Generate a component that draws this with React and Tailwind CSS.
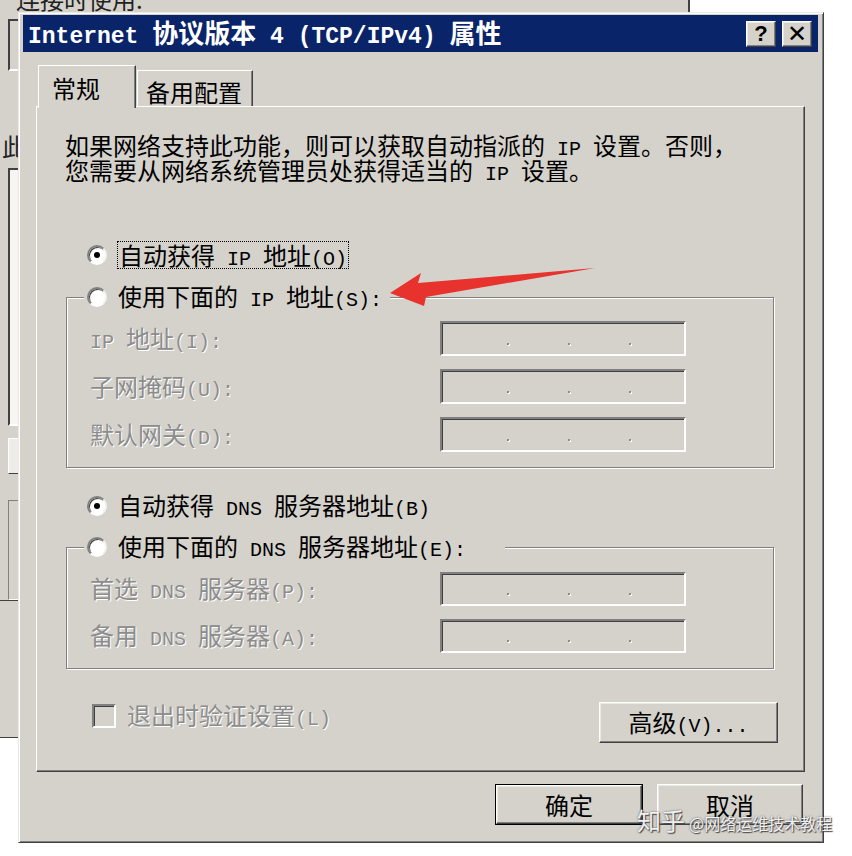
import React from "react";

const M = ({ children, className = "" }) => (
  <span className={`font-['Liberation_Mono',monospace] text-[20px] leading-[1] ${className}`}>{children}</span>
);

const Radio = ({ checked }) => (
  <span className="shrink-0 w-[20px] h-[20px] rounded-full border-2 border-t-[#808080] border-l-[#808080] border-b-white border-r-[#f4f3f0] bg-white flex items-center justify-center shadow-[inset_1px_1px_0_#404040]">
    {checked && <span className="w-[6px] h-[6px] rounded-full bg-black" />}
  </span>
);

const IpBox = ({ h = "h-[35px]" }) => (
  <div className={`w-[246px] ${h} border-2 border-t-[#808080] border-l-[#808080] border-b-white border-r-white shadow-[inset_1px_1px_0_#404040,inset_-1px_-1px_0_#d4d0c8] bg-[#d5d2cc] flex items-end pb-[9px] pl-[65px] gap-[59px]`}>
    <span className="w-[2px] h-[2px] bg-[#8c8c8c] shadow-[1px_1px_0_#fff]" />
    <span className="w-[2px] h-[2px] bg-[#8c8c8c] shadow-[1px_1px_0_#fff]" />
    <span className="w-[2px] h-[2px] bg-[#8c8c8c] shadow-[1px_1px_0_#fff]" />
  </div>
);

const Raised = ({ className = "", children }) => (
  <div className={`flex items-center justify-center bg-[#d5d2cc] border border-t-white border-l-white border-b-[#404040] border-r-[#404040] shadow-[inset_-1px_-1px_0_#808080,inset_1px_1px_0_#ebe9e4] ${className}`}>
    {children}
  </div>
);

const FieldRow = ({ label, h }) => (
  <div className="flex items-center">
    <div className="w-[350px] text-[#8c8c8c] [text-shadow:1px_1px_0_#fff]">
      <span>{label}</span>
    </div>
    <IpBox h={h} />
  </div>
);

export default function App() {
  return (
    <div className="relative w-[852px] h-[856px] bg-white overflow-hidden font-['Noto_Sans_CJK_SC',sans-serif] text-[24px] leading-[25px] text-black">
      {/* window behind */}
      <div className="absolute left-0 top-0 w-[690px] h-[738px] bg-[#d5d2cc] border-r-2 border-r-[#404040] border-b border-b-[#404040]">
        <div className="pl-[16px] -mt-[14px] text-[#222]">连接时使用:</div>
        <div className="ml-[8px] mt-[8px] w-[200px] h-[52px] border-2 border-t-[#404040] border-l-[#404040] border-b-white border-r-white" />
        <div className="pl-[2px] mt-[62px] text-[#222]">此</div>
        <div className="ml-[8px] mt-[10px] w-[200px] h-[258px] bg-[#f6f5f2] border-2 border-t-[#404040] border-l-[#404040] border-b-white border-r-white" />
        <div className="ml-[8px] mt-[12px] w-[200px] h-[36px] bg-[#eeece8] border border-t-white border-l-white border-b-[#404040] border-r-[#404040]" />
        <div className="ml-[8px] mt-[26px] w-[200px] h-[100px] border border-t-[#808080] border-l-[#808080] border-b-white border-r-white" />
        <div className="w-full h-[1px] bg-[#404040]" />
      </div>

      {/* dialog */}
      <div className="absolute left-[18px] top-[12px] w-[806px] h-[831px] bg-[#d5d2cc] border border-t-[#ebe9e4] border-l-[#ebe9e4] border-b-[#404040] border-r-[#404040] shadow-[inset_1px_1px_0_#fff,inset_-1px_-1px_0_#808080] pl-[4px] pr-[5px] pt-[2px] flex flex-col">
        {/* title bar */}
        <div className="h-[37px] bg-[#0a246a] flex items-center justify-between pl-[5px] pr-[6px]">
          <div className="text-white font-bold text-[26px] whitespace-nowrap">
            <M className="font-bold text-[23px]">Internet </M>协议版本<M className="font-bold text-[23px]"> 4 (TCP/IPv4) </M>属性
          </div>
          <div className="flex items-center gap-[6px]">
            <Raised className="w-[30px] h-[26px]">
              <span className="font-['Liberation_Sans',sans-serif] font-bold text-[22px] leading-none">?</span>
            </Raised>
            <Raised className="w-[30px] h-[26px]">
              <span className="font-['Liberation_Sans',sans-serif] text-[24px] leading-none">✕</span>
            </Raised>
          </div>
        </div>

        {/* tabs */}
        <div className="flex items-end mx-[13px] mt-[13px] h-[41px]">
          <div className="relative z-10 -mb-[2px] ml-[2px] w-[98px] h-[43px] bg-[#d5d2cc] border-t border-l border-r border-t-white border-l-white border-r-[#404040] shadow-[inset_-1px_0_0_#808080] pl-[13px] pt-[9px]">
            常规
          </div>
          <div className="ml-[1px] w-[116px] h-[36px] bg-[#d5d2cc] border-t border-l border-r border-t-white border-l-white border-r-[#404040] shadow-[inset_-1px_0_0_#808080] pl-[8px] pt-[8px]">
            备用配置
          </div>
        </div>

        {/* panel */}
        <div className="mx-[13px] h-[666px] border border-t-white border-l-white border-b-[#404040] border-r-[#404040] shadow-[inset_-1px_-1px_0_#808080] flex flex-col">
          <div className="pl-[28px] pt-[25px]">
            <div className="h-[25px] whitespace-nowrap">如果网络支持此功能，则可以获取自动指派的<M> IP </M>设置。否则，</div>
            <div className="h-[25px] whitespace-nowrap">您需要从网络系统管理员处获得适当的<M> IP </M>设置。</div>
          </div>

          <div className="mt-[59px] ml-[50px] h-[28px] flex items-center">
            <Radio checked />
            <span className="ml-[10px] px-[1px] h-[28px] leading-[26px] border border-dotted border-black whitespace-nowrap">
              <span>自动获得<M> IP </M>地址<M>(O)</M></span>
            </span>
          </div>

          <div className="mt-[28px] ml-[29px] mr-[30px] h-[171px] border border-[#808080] shadow-[1px_1px_0_#fff,inset_1px_1px_0_#fff] flex flex-col">
            <div className="-mt-[15px] ml-[17px] pl-[3px] pr-[8px] w-fit h-[28px] bg-[#d5d2cc] flex items-center">
              <Radio />
              <span className="ml-[11px] whitespace-nowrap">使用下面的<M> IP </M>地址<M>(S):</M></span>
            </div>
            <div className="mt-[10px] pl-[23px] flex flex-col gap-[13px]">
              <FieldRow label={<><M>IP </M>地址<M>(I):</M></>} />
              <FieldRow label={<>子网掩码<M>(U):</M></>} />
              <FieldRow label={<>默认网关<M>(D):</M></>} />
            </div>
          </div>

          <div className="mt-[24px] ml-[50px] h-[28px] flex items-center">
            <Radio checked />
            <span className="ml-[11px] whitespace-nowrap">自动获得<M> DNS </M>服务器地址<M>(B)</M></span>
          </div>

          <div className="mt-[27px] ml-[29px] mr-[30px] h-[122px] border border-[#808080] shadow-[1px_1px_0_#fff,inset_1px_1px_0_#fff] flex flex-col">
            <div className="-mt-[15px] ml-[17px] pl-[3px] w-[421px] h-[28px] bg-[#d5d2cc] flex items-center">
              <Radio />
              <span className="ml-[11px] whitespace-nowrap">使用下面的<M> DNS </M>服务器地址<M>(E):</M></span>
            </div>
            <div className="mt-[11px] pl-[23px] flex flex-col gap-[13px]">
              <FieldRow label={<>首选<M> DNS </M>服务器<M>(P):</M></>} h="h-[34px]" />
              <FieldRow label={<>备用<M> DNS </M>服务器<M>(A):</M></>} h="h-[34px]" />
            </div>
          </div>

          <div className="mt-[33px] pl-[55px] pr-[26px] flex items-start justify-between">
            <div className="mt-[1px] flex items-center h-[26px]">
              <span className="w-[24px] h-[24px] border-2 border-t-[#808080] border-l-[#808080] border-b-white border-r-white shadow-[inset_1px_1px_0_#404040] bg-[#d5d2cc]" />
              <span className="ml-[11px] text-[#8c8c8c] [text-shadow:1px_1px_0_#fff] whitespace-nowrap">退出时验证设置<M>(L)</M></span>
            </div>
            <Raised className="w-[179px] h-[41px]">
              <span>高级<M>(V)...</M></span>
            </Raised>
          </div>
        </div>

        {/* bottom buttons */}
        <div className="mx-[13px] mt-[12px] pr-[2px] flex justify-end gap-[14px]">
          <div className="w-[148px] h-[41px] border border-black flex">
            <Raised className="flex-1">确定</Raised>
          </div>
          <Raised className="w-[146px] h-[41px]">取消</Raised>
        </div>
      </div>

      {/* red annotation arrow */}
      <svg className="absolute left-0 top-0 pointer-events-none" width="852" height="856" viewBox="0 0 852 856">
        <defs>
          <filter id="soft" x="-10%" y="-50%" width="120%" height="200%">
            <feGaussianBlur stdDeviation="0.7" />
          </filter>
        </defs>
        <polygon
          points="390,293 421,273 418,283 595,268 426,297 424,306"
          fill="#e8312f"
          filter="url(#soft)"
        />
      </svg>

      {/* watermark */}
      <div className="absolute left-[637px] top-[806px] flex items-end whitespace-nowrap text-white/90 [text-shadow:0_0_2px_#555,1px_1px_1px_#444]">
        <span className="text-[24px] leading-[28px]">知乎</span>
        <span className="ml-[4px] text-[16px] leading-[22px]">@网络运维技术教程</span>
      </div>
    </div>
  );
}
